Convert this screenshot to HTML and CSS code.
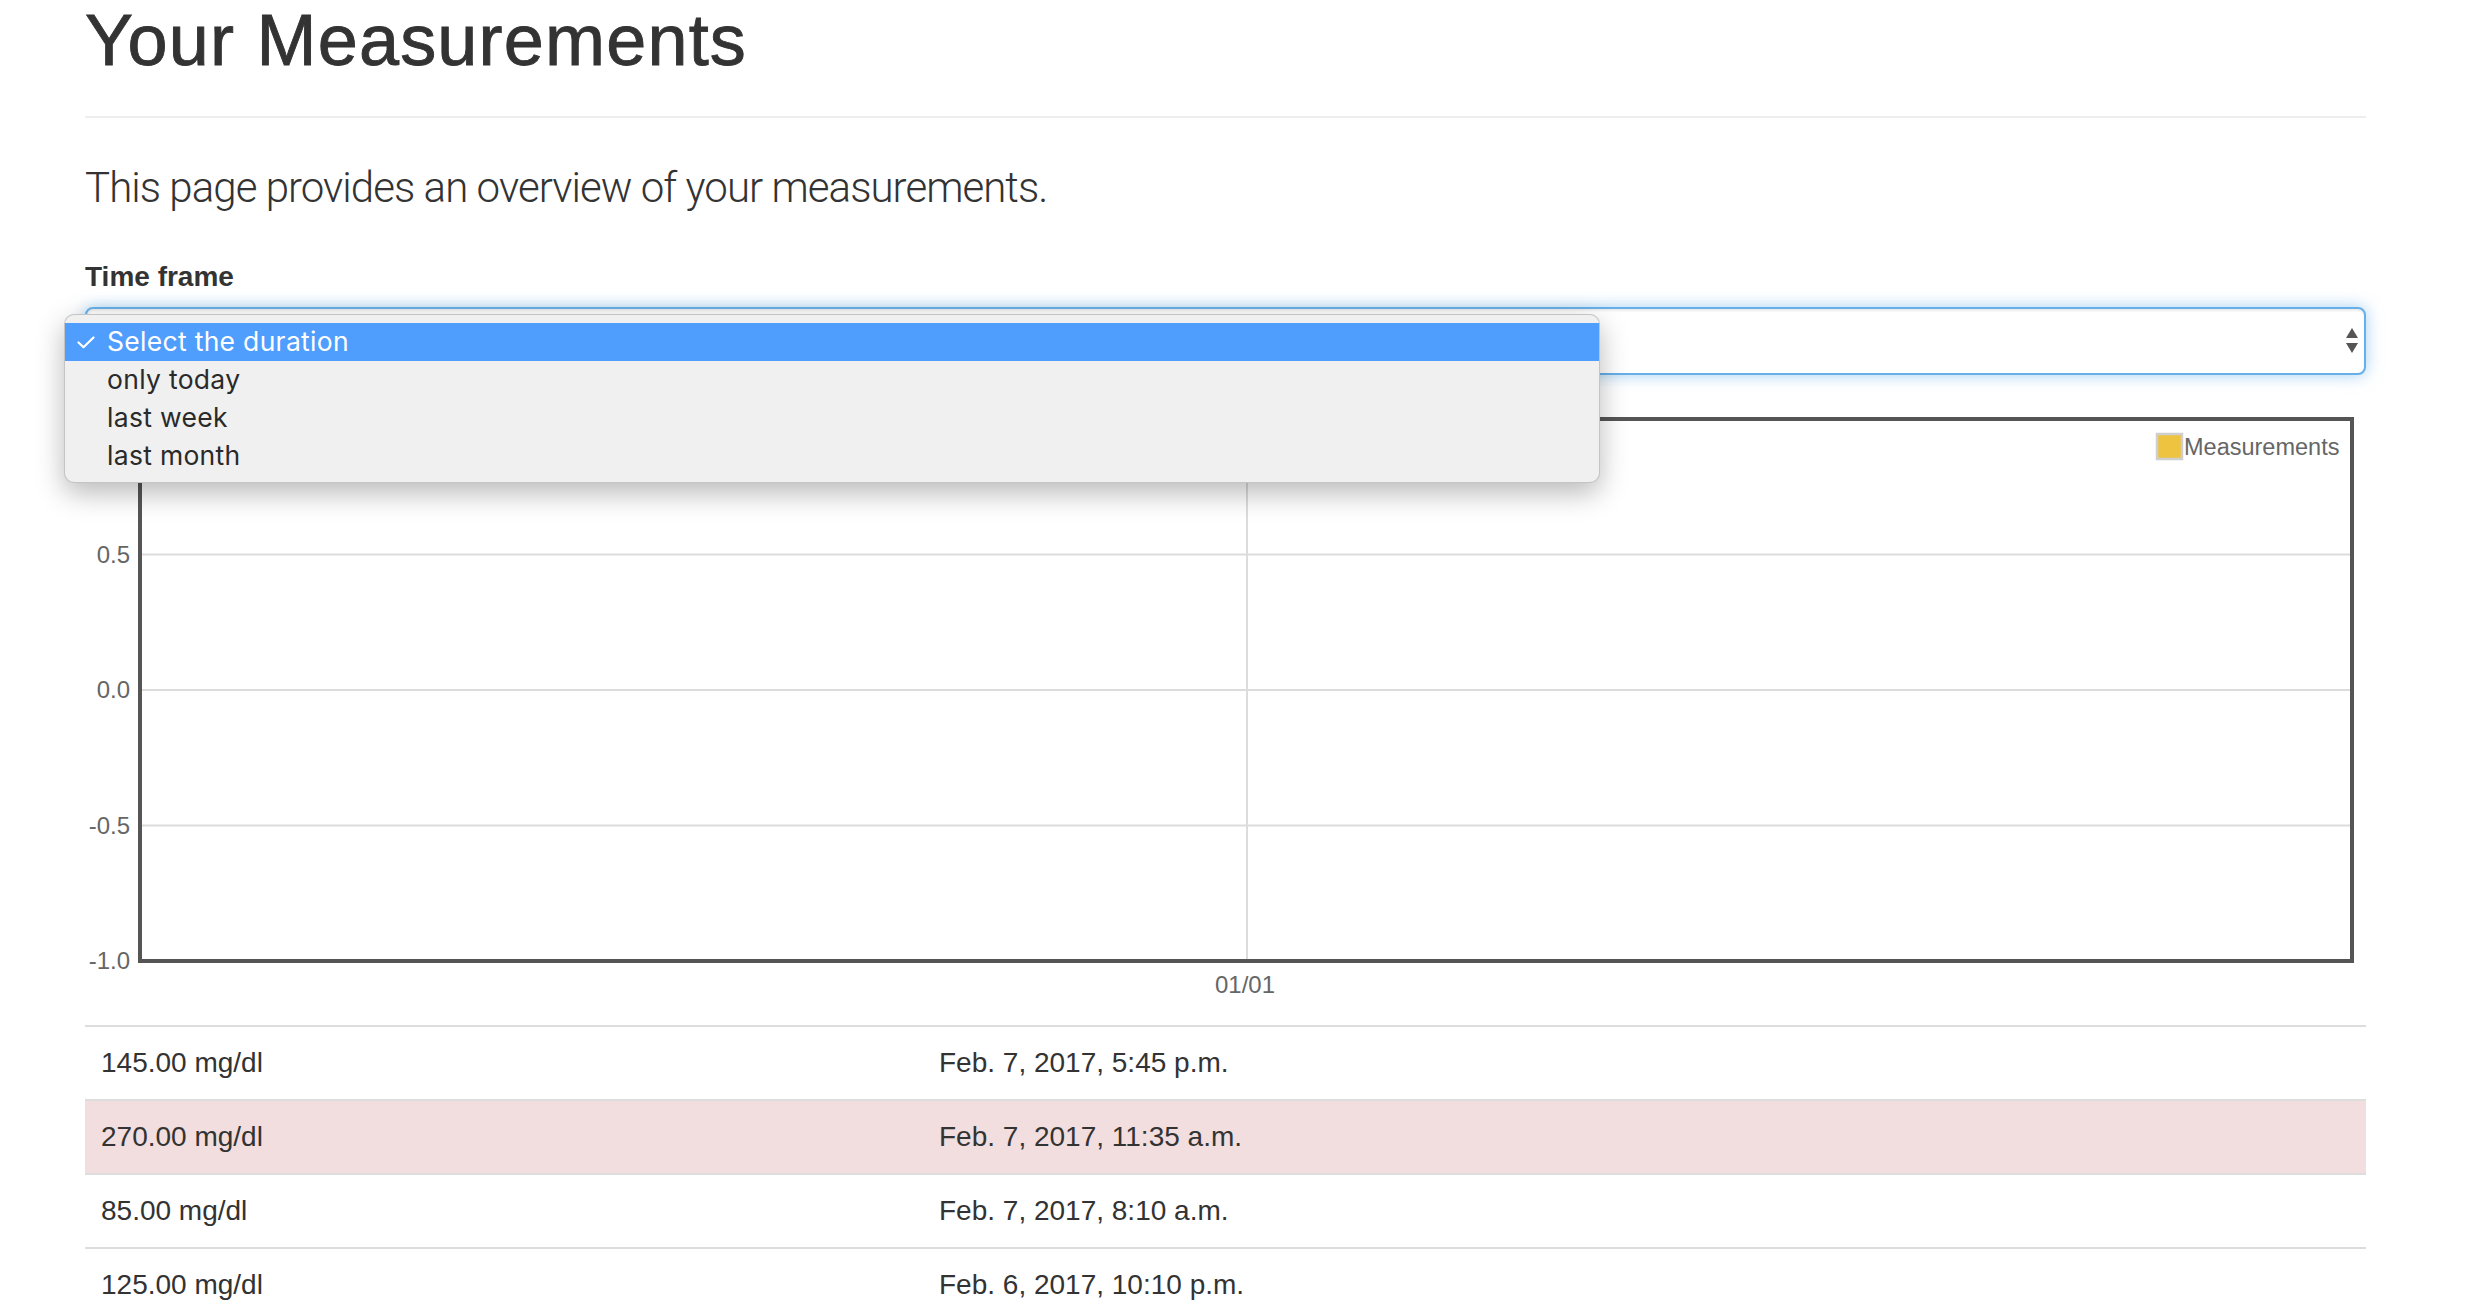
FILE: index.html
```html
<!DOCTYPE html>
<html>
<head>
<meta charset="utf-8">
<title>Your Measurements</title>
<link rel="stylesheet" href="styles.css">
</head>
<body>
<div class="container">
  <div class="page-header">
    <h1 class="title">Your Measurements</h1>
  </div>
  <p class="lead">This page provides an overview of your measurements.</p>
  <div class="form-group">
    <label class="label">Time frame</label>
    <div class="select-wrap">
      <div class="select">
        <span class="arrows">
          <span class="arr-up"></span>
          <span class="arr-down"></span>
        </span>
      </div>
      <div class="menu">
        <div class="opt selected">
          <svg class="check" width="18" height="13" viewBox="0 0 18 13"><path d="M1.5 6.5 L6.5 11.2 L16.5 1.5" fill="none" stroke="#fff" stroke-width="2.2" stroke-linecap="round" stroke-linejoin="round"/></svg>
          <span>Select the duration</span>
        </div>
        <div class="opt"><span>only today</span></div>
        <div class="opt"><span>last week</span></div>
        <div class="opt"><span>last month</span></div>
      </div>
    </div>
  </div>
  <svg class="chart" width="2281" height="620" viewBox="0 0 2281 620">
    <g class="grid">
      <line x1="55" y1="149.5" x2="2267" y2="149.5"/>
      <line x1="55" y1="285" x2="2267" y2="285"/>
      <line x1="55" y1="420.5" x2="2267" y2="420.5"/>
      <line x1="1162" y1="14" x2="1162" y2="556"/>
    </g>
    <rect class="frame" x="55" y="14" width="2212" height="542"/>
    <g class="ticks">
      <text x="45" y="158" text-anchor="end">0.5</text>
      <text x="45" y="293" text-anchor="end">0.0</text>
      <text x="45" y="429" text-anchor="end">-0.5</text>
      <text x="45" y="564" text-anchor="end">-1.0</text>
      <text x="1160" y="588" text-anchor="middle">01/01</text>
    </g>
    <rect class="legend-box" x="2072" y="29" width="25" height="25"/>
    <text class="legend-text" x="2099" y="50">Measurements</text>
  </svg>
  <table class="table">
    <tbody>
      <tr><td class="c1">145.00 mg/dl</td><td>Feb. 7, 2017, 5:45 p.m.</td></tr>
      <tr class="danger"><td class="c1">270.00 mg/dl</td><td>Feb. 7, 2017, 11:35 a.m.</td></tr>
      <tr><td class="c1">85.00 mg/dl</td><td>Feb. 7, 2017, 8:10 a.m.</td></tr>
      <tr><td class="c1">125.00 mg/dl</td><td>Feb. 6, 2017, 10:10 p.m.</td></tr>
    </tbody>
  </table>
</div>
</body>
</html>
```

FILE: styles.css
```css
* { box-sizing: border-box; }
html, body { margin: 0; padding: 0; background: #fff; }
body {
  font-family: "Liberation Sans", Arial, sans-serif;
  font-size: 28px;
  line-height: 40px;
  color: #333;
}
.container {
  width: 2281px;
  margin-left: 85px;
}
.page-header {
  padding-bottom: 18px;
  border-bottom: 2px solid #eee;
  margin-bottom: 40px;
}
.title {
  margin: 0 0 18px 0;
  font-size: 72px;
  line-height: 80px;
  font-weight: 500;
  letter-spacing: 1.2px;
  -webkit-text-stroke: 0.9px #333;
  color: #333;
}
.lead {
  margin: 0 0 40px 0;
  font-family: Roboto, "Liberation Sans", sans-serif;
  font-weight: 300;
  font-size: 42px;
  line-height: 59px;
  letter-spacing: -0.95px;
}
.label {
  display: block;
  font-weight: bold;
  margin-bottom: 10px;
}
.form-group { margin-bottom: 30px; }
.select-wrap { position: relative; }
.select {
  height: 68px;
  border: 2px solid #66afe9;
  border-radius: 8px;
  background: #fff;
  box-shadow: inset 0 2px 2px rgba(0,0,0,.075), 0 0 16px rgba(102,175,233,.6);
  display: flex;
  justify-content: flex-end;
  align-items: center;
  padding-right: 6px;
}
.arrows {
  display: flex;
  flex-direction: column;
  gap: 5px;
  margin-top: -2px;
}
.arr-up, .arr-down {
  width: 0; height: 0;
  border-left: 6px solid transparent;
  border-right: 6px solid transparent;
}
.arr-up { border-bottom: 10px solid #555; }
.arr-down { border-top: 10px solid #555; }
.menu {
  position: absolute;
  left: -21px;
  top: 7px;
  width: 1536px;
  height: 169px;
  background: #f0f0f0;
  border: 1px solid rgba(0,0,0,.18);
  border-radius: 10px;
  box-shadow: 0 10px 28px rgba(0,0,0,.28);
  padding-top: 8px;
  font-family: Inter, "Noto Sans", sans-serif;
  font-size: 26.5px;
  letter-spacing: 0.3px;
  color: #2a2a2a;
}
.opt {
  height: 38px;
  line-height: 36px;
  padding-left: 42px;
  position: relative;
}
.opt.selected {
  background: #4f9dfc;
  color: #fff;
}
.check {
  position: absolute;
  left: 12px;
  top: 13px;
}
.chart { display: block; }
.grid line { stroke: #dcdcdc; stroke-width: 2; }
.frame { fill: none; stroke: #555; stroke-width: 4; }
.ticks text, .legend-text {
  font-family: "Liberation Sans", Arial, sans-serif;
  font-size: 24px;
  fill: #666;
}
.legend-text { font-size: 23.5px; }
.legend-box { fill: #edc33f; stroke: #cfcfcf; stroke-width: 2.5; }
.table {
  width: 100%;
  border-collapse: collapse;
  border-spacing: 0;
}
.table td {
  padding: 16px;
  line-height: 40px;
  border-top: 2px solid #ddd;
  vertical-align: top;
}
.table td.c1 { width: 838px; }
.danger td { background: #f2dede; }
```
